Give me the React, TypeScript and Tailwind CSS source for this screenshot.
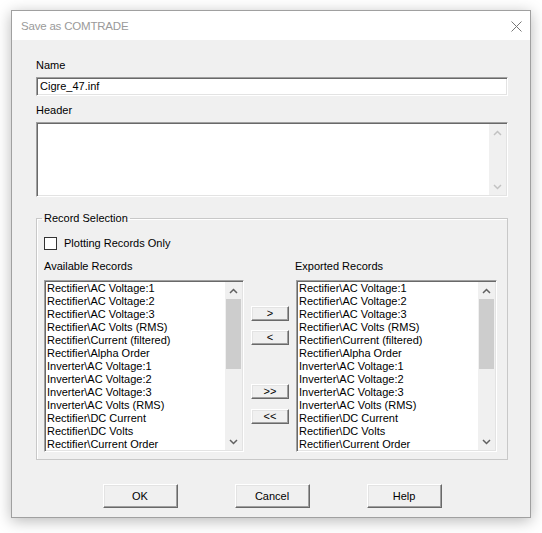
import React from "react";

const records = [
  "Rectifier\\AC Voltage:1",
  "Rectifier\\AC Voltage:2",
  "Rectifier\\AC Voltage:3",
  "Rectifier\\AC Volts (RMS)",
  "Rectifier\\Current (filtered)",
  "Rectifier\\Alpha Order",
  "Inverter\\AC Voltage:1",
  "Inverter\\AC Voltage:2",
  "Inverter\\AC Voltage:3",
  "Inverter\\AC Volts (RMS)",
  "Rectifier\\DC Current",
  "Rectifier\\DC Volts",
  "Rectifier\\Current Order",
];

const sunken =
  "border border-t-[#a0a0a0] border-l-[#a0a0a0] border-r-white border-b-white shadow-[inset_1px_1px_0_#696969,inset_-1px_-1px_0_#e3e3e3]";

const raised =
  "border border-t-white border-l-white border-r-[#696969] border-b-[#696969] shadow-[inset_-1px_-1px_0_#a0a0a0,inset_1px_1px_0_#e3e3e3] bg-[#f0f0f0]";

function Chevron({ up, color }: { up?: boolean; color: string }) {
  return (
    <svg width="9" height="6" viewBox="0 0 9 6">
      <path
        d={up ? "M1 5 L4.5 1.5 L8 5" : "M1 1 L4.5 4.5 L8 1"}
        stroke={color}
        strokeWidth="1.5"
        fill="none"
      />
    </svg>
  );
}

function RecordList({ width }: { width: string }) {
  return (
    <div className={`${width} h-[172px] bg-white flex ${sunken} p-[1px]`}>
      <div className="flex-1 overflow-hidden pl-[1px]">
        {records.map((r) => (
          <div key={r} className="h-[13px] leading-[13px] whitespace-nowrap">
            {r}
          </div>
        ))}
      </div>
      <div className="w-[17px] bg-[#f0f0f0] flex flex-col">
        <div className="h-[17px] flex items-center justify-center">
          <Chevron up color="#606060" />
        </div>
        <div className="h-[70px] mx-[1px] bg-[#cdcdcd]" />
        <div className="flex-1" />
        <div className="h-[17px] flex items-center justify-center">
          <Chevron color="#606060" />
        </div>
      </div>
    </div>
  );
}

function SmallButton({ label, className }: { label: string; className?: string }) {
  return (
    <div
      className={`h-[15px] w-[38px] flex items-center justify-center leading-[13px] ${raised} ${className ?? ""}`}
    >
      {label}
    </div>
  );
}

function DialogButton({ label }: { label: string }) {
  return (
    <div className={`w-[75px] h-[24px] flex items-center justify-center ${raised}`}>
      {label}
    </div>
  );
}

export default function App() {
  return (
    <div className="w-[542px] h-[533px] bg-white pl-[11px] pt-[10px] font-['Liberation_Sans',Arial,sans-serif] text-[11px] text-black">
      <div className="w-[520px] h-[508px] border border-[#a0a0a0] bg-[#f0f0f0] shadow-[0_3px_14px_rgba(0,0,0,0.28)] flex flex-col">
        {/* title bar */}
        <div className="h-[29px] bg-white flex items-center justify-between pl-[9px] pr-[9px]">
          <span className="text-[11.5px] text-[#9a9a9a] leading-[16px] pt-[1px] tracking-[-0.2px]">
            Save as COMTRADE
          </span>
          <svg width="11" height="11" viewBox="0 0 11 11" className="mt-[1px] -mr-[1px]">
            <path d="M0.5 0.5 L10.5 10.5 M10.5 0.5 L0.5 10.5" stroke="#777" strokeWidth="1" />
          </svg>
        </div>

        <div className="flex-1 pl-[24px] pr-[22px] pt-[19px] flex flex-col">
          <div className="h-[13px] leading-[13px]">Name</div>
          <div className={`mt-[5px] h-[19px] bg-white ${sunken} pl-[3px] flex items-center`}>
            Cigre_47.inf
          </div>

          <div className="mt-[8px] h-[13px] leading-[13px]">Header</div>
          <div className={`mt-[5px] h-[75px] bg-white ${sunken} p-[1px] flex`}>
            <div className="flex-1" />
            <div className="w-[17px] bg-[#f0f0f0] flex flex-col justify-between">
              <div className="h-[17px] flex items-center justify-center">
                <Chevron up color="#c2c2c2" />
              </div>
              <div className="h-[17px] flex items-center justify-center">
                <Chevron color="#c2c2c2" />
              </div>
            </div>
          </div>

          <fieldset className="mt-[15px] h-[248px] border border-[#c8c8c8] shadow-[inset_1px_1px_0_#ffffff] pl-[7px] pr-[7px]">
            <legend className="-ml-[2px] px-[2px] leading-[13px]">Record Selection</legend>

            <div className="mt-[12px] h-[13px] flex items-center">
              <div className="w-[13px] h-[13px] border border-[#333] bg-white" />
              <span className="ml-[7px] leading-[13px]">Plotting Records Only</span>
            </div>

            <div className="mt-[10px] grid grid-cols-[200px_38px_201px] gap-x-[7px]">
              <div className="leading-[13px] h-[13px]">Available Records</div>
              <div />
              <div className="leading-[13px] h-[13px] -ml-[1px]">Exported Records</div>

              <div className="mt-[7px]">
                <RecordList width="w-[200px]" />
              </div>
              <div className="mt-[7px] flex flex-col">
                <SmallButton label=">" className="mt-[26px]" />
                <SmallButton label="<" className="mt-[9px]" />
                <SmallButton label=">>" className="mt-[39px]" />
                <SmallButton label="<<" className="mt-[10px]" />
              </div>
              <div className="mt-[7px]">
                <RecordList width="w-[201px]" />
              </div>
            </div>
          </fieldset>

          <div className="mt-[24px] flex justify-center gap-[57px]">
            <DialogButton label="OK" />
            <DialogButton label="Cancel" />
            <DialogButton label="Help" />
          </div>
        </div>
      </div>
    </div>
  );
}
